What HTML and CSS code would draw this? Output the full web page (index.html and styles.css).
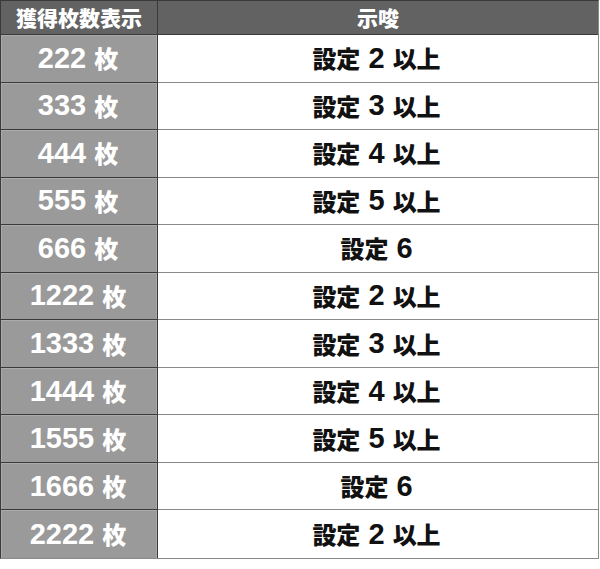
FILE: index.html
```html
<!DOCTYPE html>
<html lang="ja">
<head>
<meta charset="utf-8">
<link rel="stylesheet" href="styles.css">
</head>
<body>
<div class="tbl">
  <div class="cell head"><span class="jp">獲得枚数表示</span></div>
  <div class="cell head"><span class="jp">示唆</span></div>

  <div class="cell key">222 <span class="jp">枚</span></div>
  <div class="cell val"><span class="jp">設定</span> 2 <span class="jp">以上</span></div>

  <div class="cell key">333 <span class="jp">枚</span></div>
  <div class="cell val"><span class="jp">設定</span> 3 <span class="jp">以上</span></div>

  <div class="cell key">444 <span class="jp">枚</span></div>
  <div class="cell val"><span class="jp">設定</span> 4 <span class="jp">以上</span></div>

  <div class="cell key">555 <span class="jp">枚</span></div>
  <div class="cell val"><span class="jp">設定</span> 5 <span class="jp">以上</span></div>

  <div class="cell key">666 <span class="jp">枚</span></div>
  <div class="cell val"><span class="jp">設定</span> 6</div>

  <div class="cell key">1222 <span class="jp">枚</span></div>
  <div class="cell val"><span class="jp">設定</span> 2 <span class="jp">以上</span></div>

  <div class="cell key">1333 <span class="jp">枚</span></div>
  <div class="cell val"><span class="jp">設定</span> 3 <span class="jp">以上</span></div>

  <div class="cell key">1444 <span class="jp">枚</span></div>
  <div class="cell val"><span class="jp">設定</span> 4 <span class="jp">以上</span></div>

  <div class="cell key">1555 <span class="jp">枚</span></div>
  <div class="cell val"><span class="jp">設定</span> 5 <span class="jp">以上</span></div>

  <div class="cell key">1666 <span class="jp">枚</span></div>
  <div class="cell val"><span class="jp">設定</span> 6</div>

  <div class="cell key last">2222 <span class="jp">枚</span></div>
  <div class="cell val last"><span class="jp">設定</span> 2 <span class="jp">以上</span></div>
</div>
</body>
</html>
```

FILE: styles.css
```css
html, body {
  margin: 0;
  padding: 0;
  background: #ffffff;
}

.tbl {
  width: 599px;
  height: 559px;
  box-sizing: border-box;
  display: grid;
  grid-template-columns: 157px 1fr;
  grid-template-rows: 34px repeat(11, 1fr);
  border-left: 1px solid #3a3a3a;
  border-right: 1px solid #8a8a8a;
  border-top: 1px solid #3a3a3a;
  border-bottom: 1px solid #8a8a8a;
  font-family: "Liberation Sans", Arial, "Noto Sans CJK JP", sans-serif;
  font-weight: bold;
  font-size: 29px;
}

.cell {
  display: flex;
  align-items: center;
  justify-content: center;
  white-space: pre;
  box-sizing: border-box;
  line-height: 1;
}

.jp {
  font-family: "Noto Sans CJK JP", sans-serif;
  font-size: 24px;
  font-weight: 900;
}

.head {
  background: #626262;
  color: #ffffff;
  border-bottom: 1px solid #3a3a3a;
}

.head .jp {
  font-size: 21px;
}

.head:first-child {
  border-right: 1px solid #3a3a3a;
}

.key {
  background: #9a9a9a;
  color: #ffffff;
  border-bottom: 1px solid #3a3a3a;
  border-right: 1px solid #3a3a3a;
  box-shadow: inset 1px 1px 0 #ababab, inset -1px 0 0 #a8a8a8;
  padding-right: 2px;
}

.val {
  background: #ffffff;
  color: #111111;
  border-bottom: 1px solid #8a8a8a;
  padding-right: 3px;
}

.key.last,
.val.last {
  border-bottom: none;
}
```
